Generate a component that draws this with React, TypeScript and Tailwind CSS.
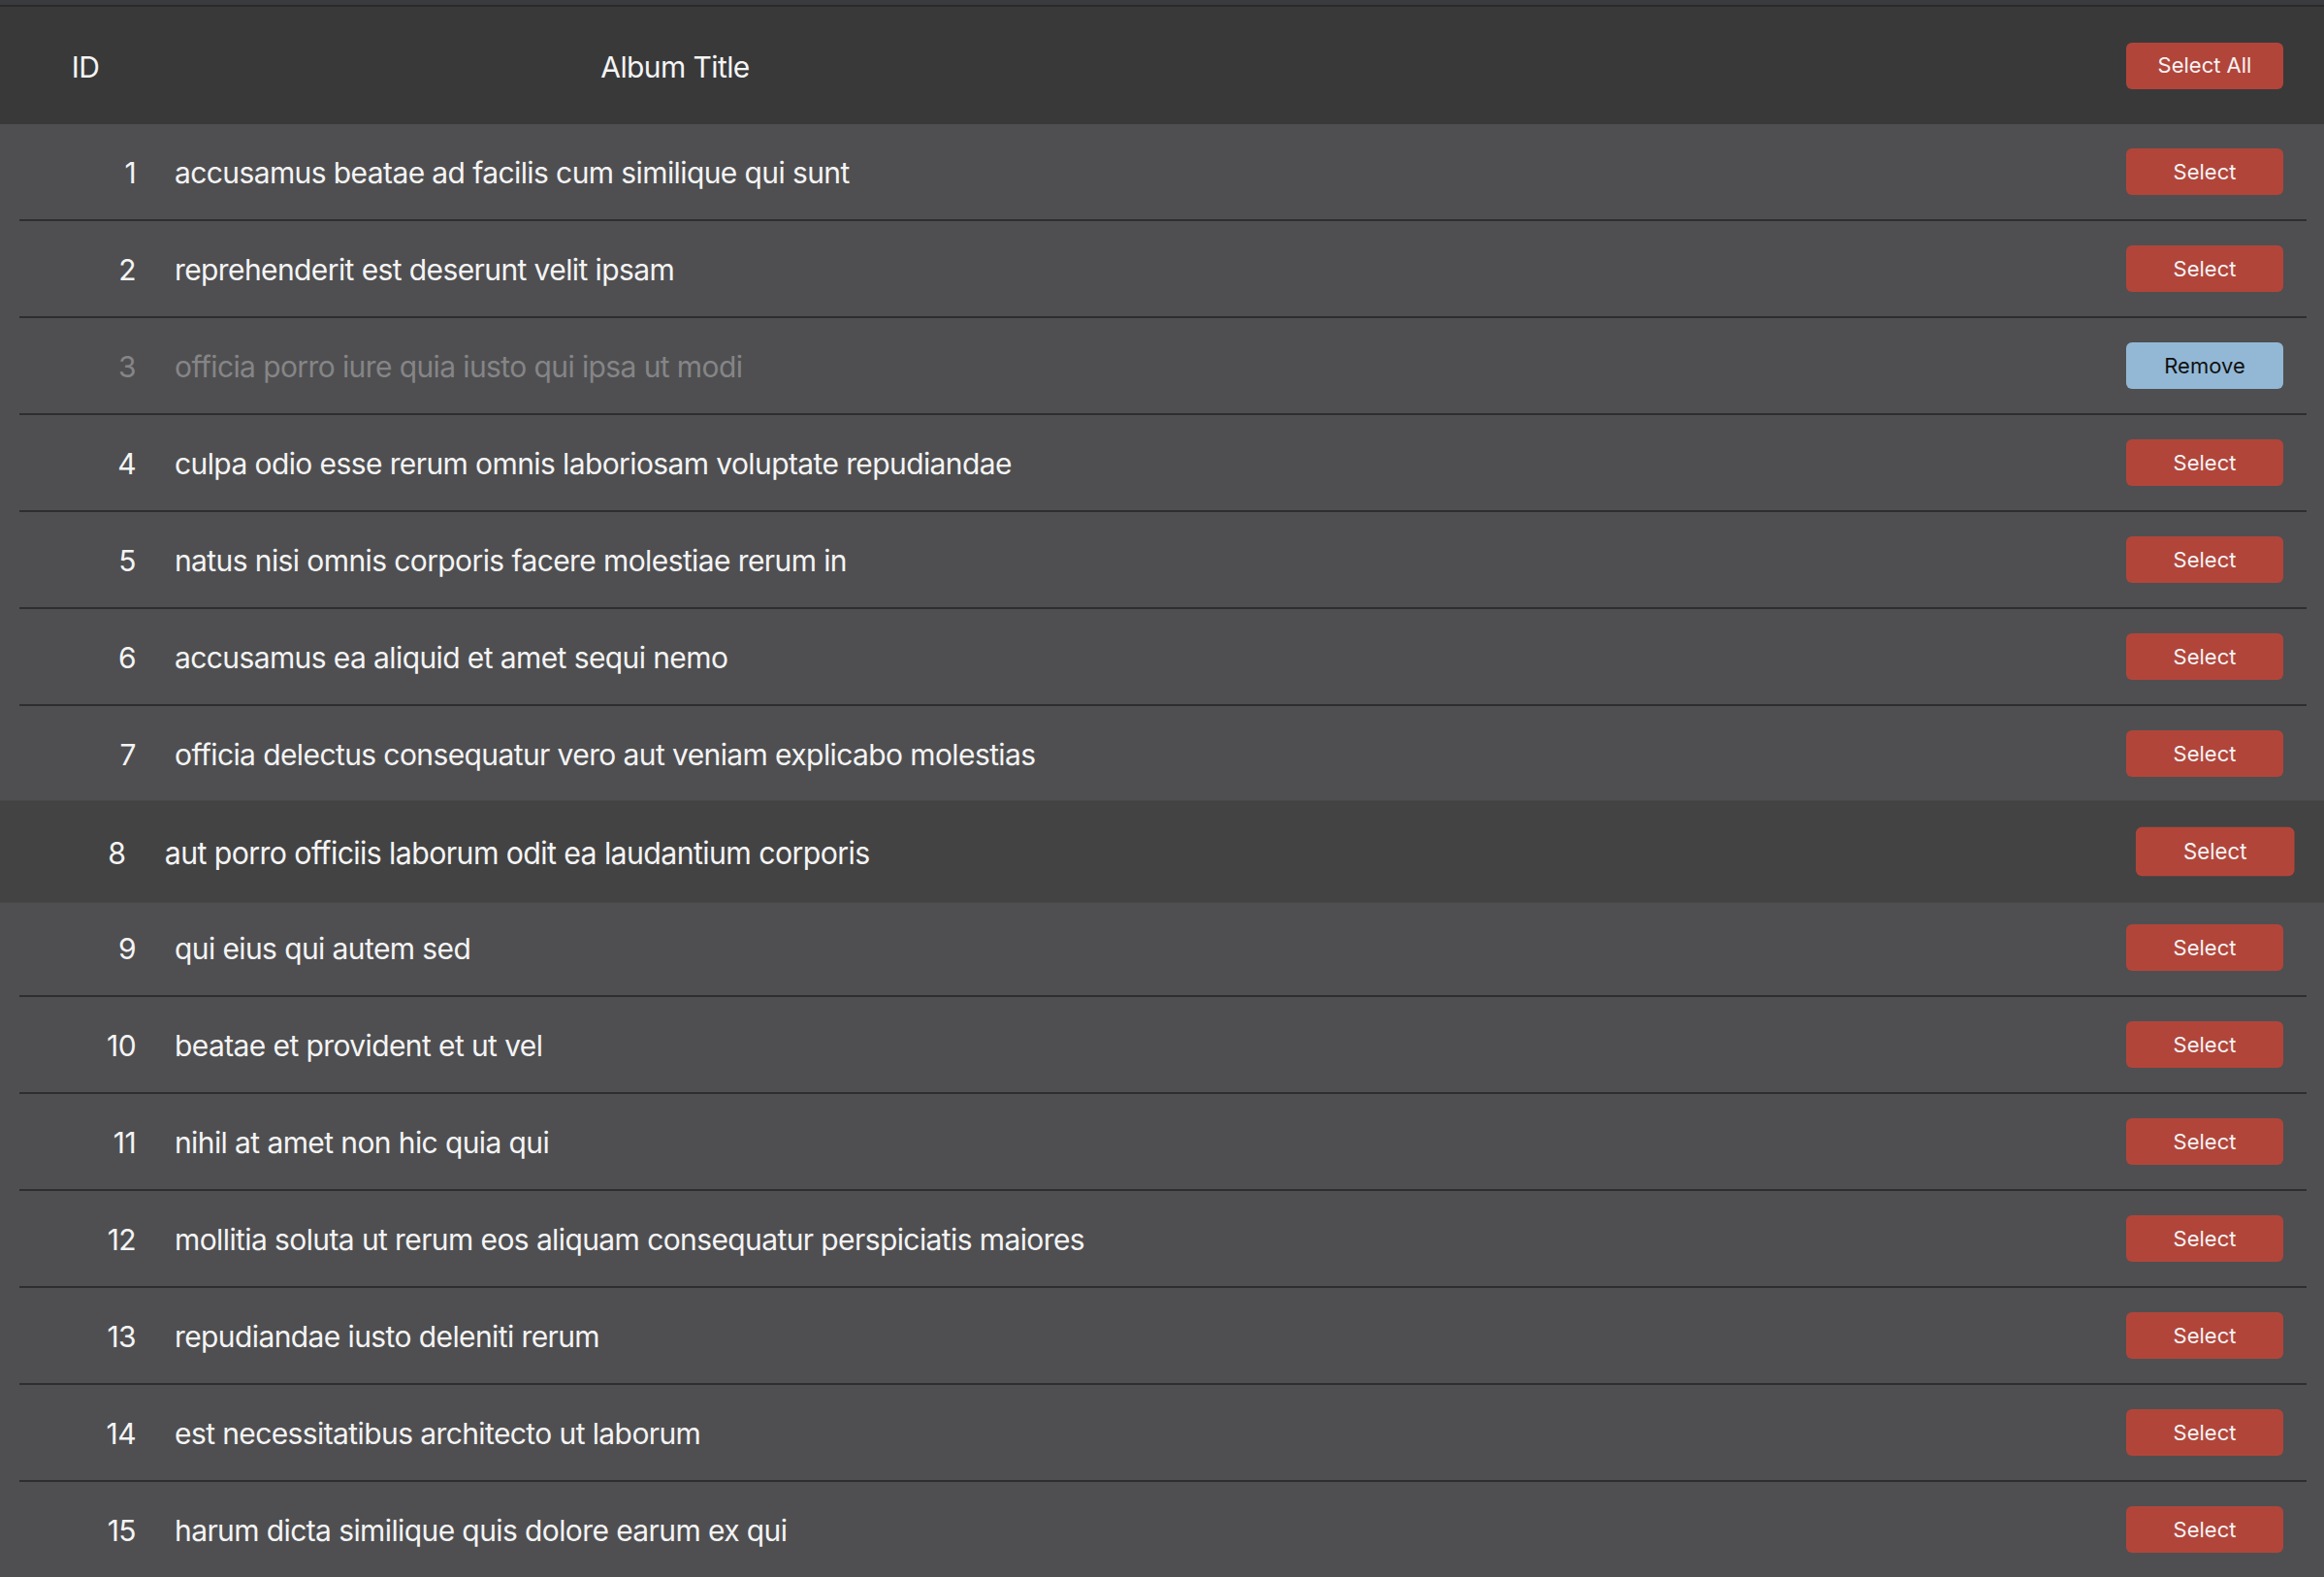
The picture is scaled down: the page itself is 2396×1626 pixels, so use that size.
import React from "react";

const albums: { id: number; title: string }[] = [
  { id: 1, title: "accusamus beatae ad facilis cum similique qui sunt" },
  { id: 2, title: "reprehenderit est deserunt velit ipsam" },
  { id: 3, title: "officia porro iure quia iusto qui ipsa ut modi" },
  { id: 4, title: "culpa odio esse rerum omnis laboriosam voluptate repudiandae" },
  { id: 5, title: "natus nisi omnis corporis facere molestiae rerum in" },
  { id: 6, title: "accusamus ea aliquid et amet sequi nemo" },
  { id: 7, title: "officia delectus consequatur vero aut veniam explicabo molestias" },
  { id: 8, title: "aut porro officiis laborum odit ea laudantium corporis" },
  { id: 9, title: "qui eius qui autem sed" },
  { id: 10, title: "beatae et provident et ut vel" },
  { id: 11, title: "nihil at amet non hic quia qui" },
  { id: 12, title: "mollitia soluta ut rerum eos aliquam consequatur perspiciatis maiores" },
  { id: 13, title: "repudiandae iusto deleniti rerum" },
  { id: 14, title: "est necessitatibus architecto ut laborum" },
  { id: 15, title: "harum dicta similique quis dolore earum ex qui" },
];

function RowContent({ id, title, selected }: { id: number; title: string; selected: boolean }) {
  return (
    <>
      <div
        className={
          "w-[136px] shrink-0 pr-[16px] pt-[3px] text-right text-[30px] tracking-[-0.6px] " +
          (selected ? "text-[#858587]" : "text-[#f4f4f4]")
        }
      >
        {id}
      </div>
      <div
        className={
          "w-[1080px] shrink-0 pl-[24px] pt-[3px] text-[30px] tracking-[-0.6px] whitespace-nowrap " +
          (selected ? "text-[#858587]" : "text-[#f4f4f4]")
        }
      >
        {title}
      </div>
      <div className="flex flex-1 justify-end pr-[24px]">
        {selected ? (
          <button className="h-[48px] w-[162px] rounded-[6px] bg-[#93b8d6] text-[22px] text-[#111111]">
            Remove
          </button>
        ) : (
          <button className="h-[48px] w-[162px] rounded-[6px] bg-[#b2453a] text-[22px] text-[#f3f3f3]">
            Select
          </button>
        )}
      </div>
    </>
  );
}

export default function App() {
  return (
    <div
      className="h-[1626px] w-full overflow-hidden bg-[#4f4f51]"
      style={{ fontFamily: "Inter, 'Noto Sans', sans-serif" }}
    >
      <div className="h-[5px] bg-[#3a3b3f]" />
      <div className="h-[2px] bg-[#29292b]" />
      <div className="flex h-[121px] items-center bg-[#39393a] pl-[20px] pr-[18px]">
        <div className="w-[136px] shrink-0 pt-[4px] text-center text-[30px] tracking-[-0.6px] text-[#f4f4f4]">ID</div>
        <div className="w-[1080px] shrink-0 pt-[4px] text-center text-[30px] tracking-[-0.6px] text-[#f4f4f4]">
          Album Title
        </div>
        <div className="flex flex-1 justify-end pr-[24px]">
          <button className="h-[48px] w-[162px] rounded-[6px] bg-[#b2453a] text-[22px] text-[#f3f3f3]">
            Select All
          </button>
        </div>
      </div>
      {albums.map((a) =>
        a.id === 8 ? (
          <div
            key={a.id}
            className="relative z-10 flex h-[100px] items-center bg-[#434343] pl-[20px] pr-[18px] scale-x-[1.01] scale-y-[1.05]"
          >
            <RowContent id={a.id} title={a.title} selected={false} />
          </div>
        ) : (
          <div
            key={a.id}
            className="ml-[20px] mr-[18px] flex h-[100px] items-center border-b-2 border-[#2e2e30]"
          >
            <RowContent id={a.id} title={a.title} selected={a.id === 3} />
          </div>
        )
      )}
    </div>
  );
}
